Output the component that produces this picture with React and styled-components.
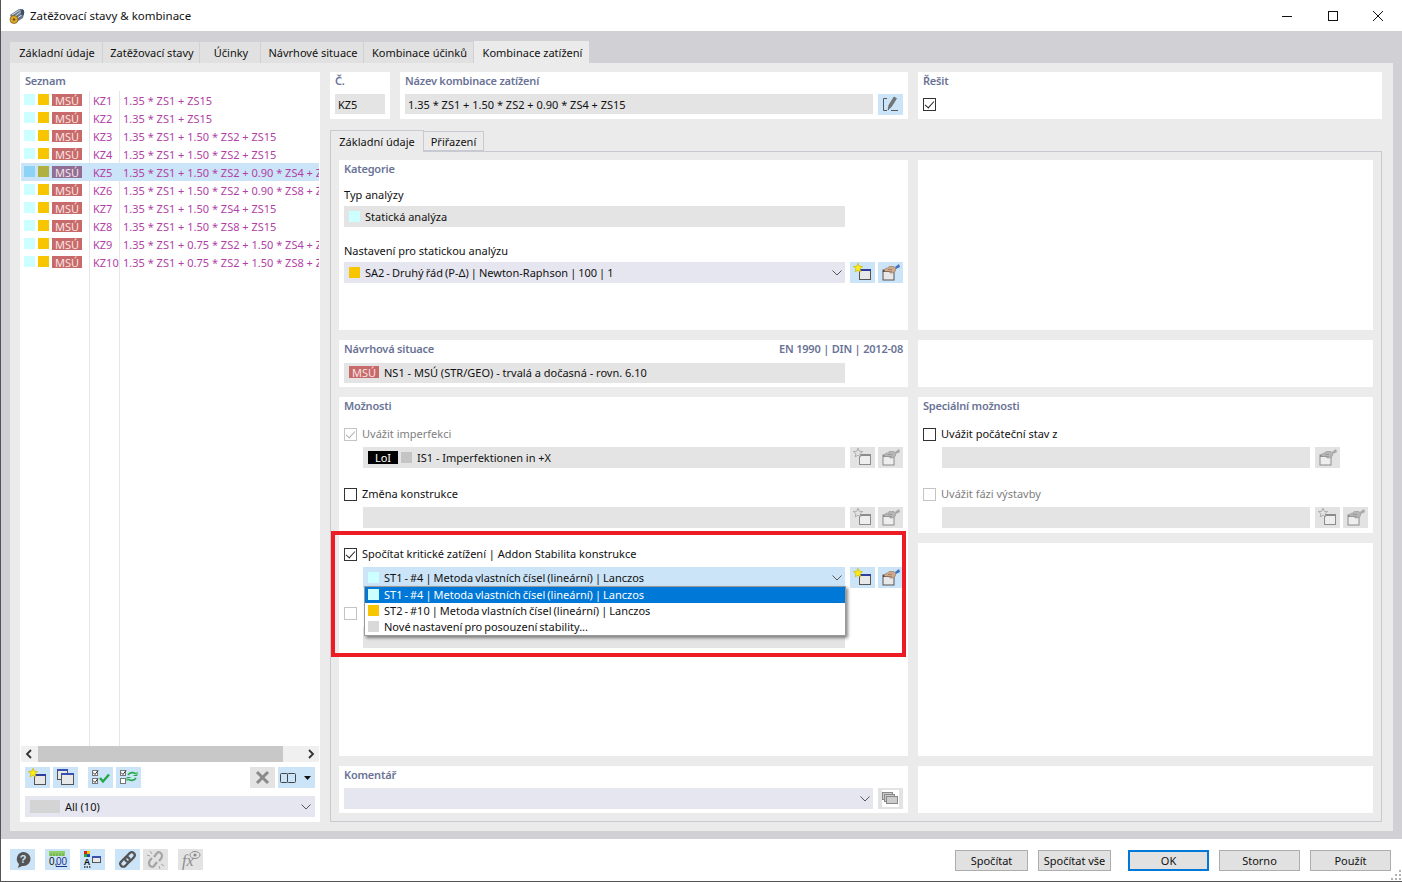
import React from 'react';
import styled, { createGlobalStyle } from 'styled-components';

const rows = [
    { id: 'KZ1', text: '1.35 * ZS1 + ZS15' },
    { id: 'KZ2', text: '1.35 * ZS1 + ZS15' },
    { id: 'KZ3', text: '1.35 * ZS1 + 1.50 * ZS2 + ZS15' },
    { id: 'KZ4', text: '1.35 * ZS1 + 1.50 * ZS2 + ZS15' },
    { id: 'KZ5', text: '1.35 * ZS1 + 1.50 * ZS2 + 0.90 * ZS4 + ZS15', selected: true },
    { id: 'KZ6', text: '1.35 * ZS1 + 1.50 * ZS2 + 0.90 * ZS8 + ZS15' },
    { id: 'KZ7', text: '1.35 * ZS1 + 1.50 * ZS4 + ZS15' },
    { id: 'KZ8', text: '1.35 * ZS1 + 1.50 * ZS8 + ZS15' },
    { id: 'KZ9', text: '1.35 * ZS1 + 0.75 * ZS2 + 1.50 * ZS4 + ZS15' },
    { id: 'KZ10', text: '1.35 * ZS1 + 0.75 * ZS2 + 1.50 * ZS8 + ZS15' },
];

const topTabs = [
    ['Základní údaje', 92],
    ['Zatěžovací stavy', 96],
    ['Účinky', 60],
    ['Návrhové situace', 102],
    ['Kombinace účinků', 109],
    ['Kombinace zatížení', 115],
];

const Star = ({ x, y, r, fill, stroke }) => {
    const pts = [];
    for (let i = 0; i < 10; i++) {
        const rad = i % 2 === 0 ? r : r * 0.45;
        const a = -Math.PI / 2 + (i * Math.PI) / 5;
        pts.push(`${(x + rad * Math.cos(a)).toFixed(1)},${(y + rad * Math.sin(a)).toFixed(1)}`);
    }
    return <polygon points={pts.join(' ')} fill={fill} stroke={stroke} strokeWidth="0.7" />;
};

const NewIcon = ({ off }) => (
    <svg width="25" height="21" viewBox="0 0 25 21">
        <rect x="9.500" y="7.500" width="11" height="10" fill={off ? '#eee' : '#e8e8e8'} stroke={off ? '#8c8c8c' : '#555'} />
        <rect x="9" y="7" width="12" height="2" fill={off ? '#8c8c8c' : '#2f3f9c'} />
        <Star x={8} y={6} r={4.800} fill={off ? '#e3e3e3' : '#f7ee1e'} stroke={off ? '#9a9a9a' : '#d8b400'} />
    </svg>
);

const HandIcon = ({ off }) => (
    <svg width="25" height="21" viewBox="0 0 25 21">
        <rect x="5" y="8" width="11" height="10" fill={off ? '#eee' : '#e8e8e8'} stroke={off ? '#8c8c8c' : '#555'} />
        <rect x="5" y="8" width="11" height="2" fill={off ? '#8c8c8c' : '#444'} />
        <path d="M6 9c0-2 2-3 4-3l1-1.500h5l1.500 1.500v3l-2.500 2h-3l-1-1.500H7.500z" fill={off ? '#b5b5b5' : '#cfa88c'} stroke={off ? '#8c8c8c' : '#8a6a55'} strokeWidth="0.5" />
        <path d="M10 7.500h4M11 9.500h3" stroke={off ? '#8c8c8c' : '#8a6a55'} strokeWidth="0.6" />
        <path d="M17 5l4-3 1 3-4 2z" fill={off ? '#a8a8a8' : '#3f74c4'} />
    </svg>
);

const EditIcon = () => (
    <svg width="25" height="21" viewBox="0 0 25 21">
        <path d="M9 4.500H5.500v12H9M13 16.500h7" fill="none" stroke="#555" />
        <path d="M10 16l1-5 5-8 2.500 1.500-5 8z" fill="#777" stroke="#444" strokeWidth="0.5" />
    </svg>
);

const CopyIcon = () => (
    <svg width="25" height="21" viewBox="0 0 25 21">
        <rect x="4.500" y="2.500" width="10" height="10" fill="#e8e8e8" stroke="#555" />
        <rect x="4" y="2" width="11" height="2" fill="#3b4fb0" />
        <rect x="8.500" y="6.500" width="12" height="11" fill="#e8e8e8" stroke="#555" />
        <rect x="8" y="6" width="13" height="2" fill="#3b4fb0" />
    </svg>
);

const CheckAllIcon = () => (
    <svg width="25" height="21" viewBox="0 0 25 21">
        <rect x="4.500" y="3.500" width="5" height="5" fill="#fff" stroke="#777" />
        <rect x="4.500" y="11.500" width="5" height="5" fill="#fff" stroke="#777" />
        <path d="M5 5.500l2 2 3-4M5 13.500l2 2 3-4" fill="none" stroke="#333" />
        <path d="M12 11l3 3.500 6-7" fill="none" stroke="#25a84a" strokeWidth="2.400" />
    </svg>
);

const SwapIcon = () => (
    <svg width="25" height="21" viewBox="0 0 25 21">
        <rect x="4.500" y="3.500" width="5" height="5" fill="#fff" stroke="#777" />
        <rect x="4.500" y="11.500" width="5" height="5" fill="#fff" stroke="#777" />
        <path d="M5 5.500l2 2 3-4" fill="none" stroke="#333" />
        <path d="M12 8c2-3 6-3 8-1M20 11c-2 3-6 3-8 1" fill="none" stroke="#25a84a" strokeWidth="1.600" />
        <path d="M21 5v3.500h-3.500M11 14v-3.500h3.500" fill="none" stroke="#25a84a" />
    </svg>
);

const CrossIcon = () => (
    <svg width="25" height="21" viewBox="0 0 25 21">
        <path d="M7 5l11 11M18 5L7 16" stroke="#8a8a8a" strokeWidth="3" />
    </svg>
);

const ColumnsIcon = () => (
    <svg width="37" height="21" viewBox="0 0 37 21">
        <rect x="2.500" y="6.500" width="7" height="9" rx="1" fill="none" stroke="#444" />
        <rect x="9.500" y="6.500" width="8" height="9" rx="1" fill="none" stroke="#444" />
        <path d="M26 9h7l-3.500 4z" fill="#111" />
    </svg>
);

const CommentIcon = () => (
    <svg width="25" height="21" viewBox="0 0 25 21">
        <rect x="4" y="2" width="17" height="17" fill="#fff" />
        <rect x="4.500" y="4.500" width="10" height="7" fill="#ccc" stroke="#888" />
        <rect x="6.500" y="6.500" width="10" height="7" fill="#ccc" stroke="#888" />
        <rect x="8.500" y="8.500" width="11" height="7" fill="#ccc" stroke="#888" />
    </svg>
);

const HelpIcon = () => (
    <svg width="25" height="21" viewBox="0 0 25 21">
        <path d="M13 3a7 7 0 0 1 1 14l-2 0-4 2 1-4a7 7 0 0 1 4-12z" fill="#555" />
        <text x="13" y="14" textAnchor="middle" fontSize="11" fontWeight="700" fontFamily="'Liberation Sans', sans-serif" fill="#cce4f7">?</text>
    </svg>
);

const NumberIcon = () => (
    <svg width="25" height="21" viewBox="0 0 25 21">
        <rect x="4" y="2" width="16" height="5" fill="#8fcf6a" />
        <path d="M6 4.500v2.500M9 4.500v2.500M12 4.500v2.500M15 4.500v2.500M18 4.500v2.500" stroke="#5f9f45" />
        <text x="4" y="16" fontSize="10" fontFamily="'Liberation Sans', sans-serif" fill="#111">0,</text>
        <text x="11" y="16" fontSize="10" fontFamily="'Liberation Sans', sans-serif" fill="#24308f" textDecoration="underline">00</text>
    </svg>
);

const ColorIcon = () => (
    <svg width="25" height="21" viewBox="0 0 25 21">
        <rect x="4" y="2" width="3" height="3" fill="#d62020" />
        <rect x="7" y="2" width="3" height="3" fill="#e8c800" />
        <rect x="4" y="5" width="3" height="3" fill="#2aa52a" />
        <rect x="7" y="5" width="3" height="3" fill="#2040c8" />
        <text x="7" y="16" textAnchor="middle" fontSize="9" fontWeight="700" fontFamily="'Liberation Sans', sans-serif" fill="#111">A</text>
        <path d="M4 18h1.500M6.500 18H8M9 18h1.500" stroke="#333" strokeWidth="1.500" />
        <rect x="12.500" y="7.500" width="8" height="6" fill="#e8e8e8" stroke="#555" />
        <rect x="12" y="7" width="9" height="2" fill="#3b4fb0" />
    </svg>
);

const LinkIcon = () => (
    <svg width="25" height="21" viewBox="0 0 25 21">
        <g transform="rotate(-45 12.500 10.500)" fill="none" stroke="#555" strokeWidth="2.200">
            <rect x="3.500" y="7.500" width="11" height="6" rx="3" />
            <rect x="10.500" y="7.500" width="11" height="6" rx="3" />
        </g>
    </svg>
);

const UnlinkIcon = () => (
    <svg width="25" height="21" viewBox="0 0 25 21">
        <path d="M11 8l3-4c2-2 5 0 5 3 0 2-1 3-3 5M14 13l-3 4c-2 2-5 0-5-3 0-2 1-3 3-5" fill="none" stroke="#a5a5a5" strokeWidth="2.200" />
        <path d="M7 2l2 3M4 6l3 1M18 15l3 2M16 17l1 3" stroke="#a5a5a5" />
    </svg>
);

const FxIcon = () => (
    <svg width="25" height="21" viewBox="0 0 25 21">
        <text x="4" y="17" fontSize="16" fontStyle="italic" fontFamily="'Liberation Serif', serif" fill="#8c8c8c">fx</text>
        <ellipse cx="17" cy="6" rx="5" ry="3.500" fill="none" stroke="#8c8c8c" />
        <circle cx="17" cy="6" r="1.600" fill="#8c8c8c" />
    </svg>
);

const AppIcon = () => (
    <svg width="18" height="18" viewBox="0 0 18 18">
        <path d="M2 8L11 2h3q3 1 2 5l-1 4-8 5z" fill="#66788c" />
        <path d="M4 8l8-5M6 10l8-6M8 12l7-5" stroke="#cfd9e2" />
        <ellipse cx="14.500" cy="5.500" rx="1.600" ry="3" fill="#3f4f60" />
        <circle cx="6" cy="12.500" r="4" fill="#e0a92b" stroke="#6b5316" strokeWidth="0.700" />
        <circle cx="6" cy="12.500" r="1.300" fill="#6b5316" />
    </svg>
);

const App = () => (
    <Window>
        <GlobalStyle />
        <TitleBar>
            <AppIcon />
            <TitleText>Zatěžovací stavy &amp; kombinace</TitleText>
            <WindowControls>
                <svg width="10" height="10" viewBox="0 0 10 10"><path d="M0 5.500h10" stroke="#111" /></svg>
                <svg width="10" height="10" viewBox="0 0 10 10"><rect x="0.500" y="0.500" width="9" height="9" fill="none" stroke="#111" /></svg>
                <svg width="10" height="10" viewBox="0 0 10 10"><path d="M0 0l10 10M10 0L0 10" stroke="#111" /></svg>
            </WindowControls>
        </TitleBar>

        <Workspace>
            <TabStrip>
                {topTabs.map(([label, width], i) => (
                    <TopTab key={label} $width={width} $active={i === topTabs.length - 1}>{label}</TopTab>
                ))}
            </TabStrip>
            <MainPanel>
                <ListPanel>
                    <ListTitle>Seznam</ListTitle>
                    <ListArea>
                        {rows.map((row) => (
                            <ListRow key={row.id} $selected={row.selected}>
                                <Swatch $color={row.selected ? '#8dd3f5' : '#ccffff'} />
                                <Swatch $color={row.selected ? '#b0b040' : '#f7c600'} />
                                <Badge $color={row.selected ? '#916e96' : '#c96a6a'}>MSÚ</Badge>
                                <RowCode>{row.id}</RowCode>
                                <RowFormula>{row.text}</RowFormula>
                            </ListRow>
                        ))}
                    </ListArea>
                    <ScrollBar>
                        <ScrollArrow viewBox="0 0 8 10"><path d="M6 1L2 5l4 4" /></ScrollArrow>
                        <ScrollThumb />
                        <ScrollArrow viewBox="0 0 8 10"><path d="M2 1l4 4-4 4" /></ScrollArrow>
                    </ScrollBar>
                    <ListToolbar>
                        <IconButton><NewIcon /></IconButton>
                        <IconButton><CopyIcon /></IconButton>
                        <IconButton $left={10}><CheckAllIcon /></IconButton>
                        <IconButton><SwapIcon /></IconButton>
                        <ToolbarGap />
                        <IconButton $off><CrossIcon /></IconButton>
                        <IconButton $wide><ColumnsIcon /></IconButton>
                    </ListToolbar>
                    <FilterSelect>
                        <FilterSwatch />
                        All (10)
                        <Chevron />
                    </FilterSelect>
                </ListPanel>

                <RightColumn>
                    <HeaderRow>
                        <HeaderCard $width={60}>
                            <CardTitle>Č.</CardTitle>
                            <Field $inset>KZ5</Field>
                        </HeaderCard>
                        <HeaderCard $width={508}>
                            <CardTitle>Název kombinace zatížení</CardTitle>
                            <FieldRow $top={0}>
                                <Field $grow $inset>1.35 * ZS1 + 1.50 * ZS2 + 0.90 * ZS4 + ZS15</Field>
                                <IconButton><EditIcon /></IconButton>
                            </FieldRow>
                        </HeaderCard>
                        <HeaderCard $width={464}>
                            <CardTitle>Řešit</CardTitle>
                            <HeaderCheck $checked />
                        </HeaderCard>
                    </HeaderRow>

                    <SubTabs>
                        <SubTab $active $width={94}>Základní údaje</SubTab>
                        <SubTab $width={60}>Přiřazení</SubTab>
                    </SubTabs>

                    <Frame>
                        <Card>
                            <SectionTitle>Kategorie</SectionTitle>
                            <FieldLabel>Typ analýzy</FieldLabel>
                            <Field $width={501} $tall>
                                <Swatch $color="#ccffff" />
                                Statická analýza
                            </Field>
                            <FieldLabel $top={15}>Nastavení pro statickou analýzu</FieldLabel>
                            <FieldRow $top={0}>
                                <Select $width={501}>
                                    <Swatch $color="#f7c600" />
                                    SA2 - Druhý řád (P-Δ) | Newton-Raphson | 100 | 1
                                    <Chevron />
                                </Select>
                                <IconButton><NewIcon /></IconButton>
                                <IconButton $tight><HandIcon /></IconButton>
                            </FieldRow>
                        </Card>
                        <Card />

                        <Card>
                            <SectionHead>
                                <SectionTitle>Návrhová situace</SectionTitle>
                                <NormText>EN 1990 | DIN | 2012-08</NormText>
                            </SectionHead>
                            <Field $width={501} $raised>
                                <Badge $color="#c96a6a">MSÚ</Badge>
                                NS1 - MSÚ (STR/GEO) - trvalá a dočasná - rovn. 6.10
                            </Field>
                        </Card>
                        <Card />

                        <TallCard>
                            <SectionTitle>Možnosti</SectionTitle>
                            <CheckRow $top={12} $off>
                                <CheckBox $checked $off />
                                Uvážit imperfekci
                            </CheckRow>
                            <IndentRow $top={6}>
                                <Field $width={482} $tall>
                                    <DarkBadge>LoI</DarkBadge>
                                    <Swatch $color="#c4c4c4" />
                                    IS1 - Imperfektionen in +X
                                </Field>
                                <IconButton $off><NewIcon off /></IconButton>
                                <IconButton $off $tight><HandIcon off /></IconButton>
                            </IndentRow>
                            <CheckRow $top={19}>
                                <CheckBox />
                                Změna konstrukce
                            </CheckRow>
                            <IndentRow $top={6}>
                                <Field $width={482} $tall />
                                <IconButton $off><NewIcon off /></IconButton>
                                <IconButton $off $tight><HandIcon off /></IconButton>
                            </IndentRow>
                            <CheckRow $top={19}>
                                <CheckBox $checked />
                                Spočítat kritické zatížení | Addon Stabilita konstrukce
                            </CheckRow>
                            <IndentRow $top={6}>
                                <Select $width={482} $open>
                                    <Swatch $color="#ccffff" />
                                    ST1 - #4 | Metoda vlastních čísel (lineární) | Lanczos
                                    <Chevron />
                                </Select>
                                <IconButton><NewIcon /></IconButton>
                                <IconButton $tight><HandIcon /></IconButton>
                                <DropList>
                                    <DropItem $active>
                                        <Swatch $color="#ccffff" />
                                        ST1 - #4 | Metoda vlastních čísel (lineární) | Lanczos
                                    </DropItem>
                                    <DropItem>
                                        <Swatch $color="#f7c600" />
                                        ST2 - #10 | Metoda vlastních čísel (lineární) | Lanczos
                                    </DropItem>
                                    <DropItem>
                                        <Swatch $color="#d9d9d9" />
                                        Nové nastavení pro posouzení stability...
                                    </DropItem>
                                </DropList>
                            </IndentRow>
                            <CheckRow $top={18}>
                                <CheckBox $off />
                            </CheckRow>
                            <IndentRow $top={7}>
                                <Field $width={482} $tall />
                            </IndentRow>
                            <RedFrame />
                        </TallCard>

                        <Card>
                            <SectionTitle>Speciální možnosti</SectionTitle>
                            <CheckRow $top={12}>
                                <CheckBox />
                                Uvážit počáteční stav z
                            </CheckRow>
                            <IndentRow $top={6}>
                                <Field $width={368} $tall />
                                <IconButton $off><HandIcon off /></IconButton>
                            </IndentRow>
                            <CheckRow $top={19} $off>
                                <CheckBox $off />
                                Uvážit fázi výstavby
                            </CheckRow>
                            <IndentRow $top={6}>
                                <Field $width={368} $tall />
                                <IconButton $off><NewIcon off /></IconButton>
                                <IconButton $off $tight><HandIcon off /></IconButton>
                            </IndentRow>
                        </Card>
                        <Card />

                        <Card>
                            <SectionTitle>Komentář</SectionTitle>
                            <FieldRow $top={4}>
                                <Select $width={529}>
                                    <Chevron />
                                </Select>
                                <IconButton $off><CommentIcon /></IconButton>
                            </FieldRow>
                        </Card>
                        <Card />
                    </Frame>
                </RightColumn>
            </MainPanel>
        </Workspace>

        <Footer>
            <IconButton><HelpIcon /></IconButton>
            <IconButton $left={10}><NumberIcon /></IconButton>
            <IconButton $left={10}><ColorIcon /></IconButton>
            <IconButton $left={10}><LinkIcon /></IconButton>
            <IconButton $off><UnlinkIcon /></IconButton>
            <IconButton $off $left={10}><FxIcon /></IconButton>
            <ToolbarGap />
            <DialogButton $width={73}>Spočítat</DialogButton>
            <DialogButton $width={73} $left={10}>Spočítat vše</DialogButton>
            <DialogButton $width={81} $left={17} $primary>OK</DialogButton>
            <DialogButton $width={81} $left={10}>Storno</DialogButton>
            <DialogButton $width={81} $left={10}>Použít</DialogButton>
            <Grip viewBox="0 0 11 11">
                <path d="M8 0h2v2H8zM4 4h2v2H4zM8 4h2v2H8zM0 8h2v2H0zM4 8h2v2H4zM8 8h2v2H8z" />
            </Grip>
        </Footer>
    </Window>
);

const Chevron = () => (
    <ChevronMark viewBox="0 0 10 6">
        <path d="M0.500 0.500L5 5l4.500-4.500" />
    </ChevronMark>
);

const GlobalStyle = createGlobalStyle`
    html, body {
        margin: 0;
        padding: 0;
        background: #fff;
    }
    body {
        font-family: "Noto Sans", "Open Sans", sans-serif;
        font-size: 11px;
        color: #111;
    }
`;

const Window = styled.div`
    width: 1402px;
    height: 882px;
    box-sizing: border-box;
    display: flex;
    flex-direction: column;
    border-left: 1px solid #555;
    border-bottom: 1px solid #555;
    overflow: hidden;
    background: #fff;
`;

const TitleBar = styled.div`
    height: 31px;
    flex: none;
    display: flex;
    align-items: center;
    padding-left: 7px;
`;

const TitleText = styled.span`
    margin-left: 4px;
    font-size: 11.500px;
`;

const WindowControls = styled.div`
    margin-left: auto;
    width: 101px;
    padding-right: 19px;
    display: flex;
    justify-content: space-between;
`;

const Workspace = styled.div`
    height: 808px;
    flex: none;
    box-sizing: border-box;
    background: #d0d0d5;
    padding: 10px 9px 8px;
    display: flex;
    flex-direction: column;
`;

const TabStrip = styled.div`
    display: flex;
    gap: 1px;
    height: 22px;
    flex: none;
    align-items: flex-end;
`;

const TopTab = styled.div`
    width: ${(p) => p.$width}px;
    height: ${(p) => (p.$active ? 22 : 21)}px;
    box-sizing: border-box;
    padding-left: 2px;
    display: flex;
    align-items: center;
    justify-content: center;
    background: ${(p) => (p.$active ? '#ebebeb' : '#e1e1e1')};
    white-space: nowrap;
`;

const MainPanel = styled.div`
    flex: 1;
    background: #ebebeb;
    padding: 9px 10px;
    display: flex;
    gap: 10px;
    min-height: 0;
`;

const ListPanel = styled.div`
    width: 300px;
    flex: none;
    background: #fff;
    display: flex;
    flex-direction: column;
    padding: 0 1px;
    box-sizing: border-box;
`;

const SectionTitle = styled.div`
    color: #6a7396;
    font-weight: 600;
    letter-spacing: -0.2px;
    height: 18px;
    line-height: 18px;
`;

const ListTitle = styled(SectionTitle)`
    padding-left: 4px;
    height: 19px;
`;

const ListArea = styled.div`
    height: 655px;
    flex: none;
    overflow: hidden;
    background:
        linear-gradient(#e6e6e6, #e6e6e6) 68px 0 / 1px 100% no-repeat,
        linear-gradient(#e6e6e6, #e6e6e6) 98px 0 / 1px 100% no-repeat;
`;

const Swatch = styled.span`
    width: 11px;
    height: 11px;
    flex: none;
    margin-right: 3px;
    background: ${(p) => p.$color};
`;

const Badge = styled.span`
    width: 30px;
    height: 12px;
    flex: none;
    display: inline-flex;
    align-items: center;
    justify-content: center;
    background: ${(p) => p.$color};
    color: #f7e4e4;
    font-size: 11px;
    margin-right: 5px;
`;

const ListRow = styled.div`
    height: 18px;
    display: flex;
    align-items: center;
    padding-left: 3px;
    white-space: nowrap;
    background: ${(p) => (p.$selected ? '#cce4f7' : 'transparent')};
    ${Swatch}, ${Badge} {
        align-self: flex-start;
        margin-top: 3px;
    }
`;

const RowCode = styled.span`
    width: 30px;
    margin-left: 6px;
    flex: none;
    color: #b23fa6;
`;

const RowFormula = styled.span`
    color: #b23fa6;
`;

const ScrollBar = styled.div`
    height: 16px;
    flex: none;
    background: #f0f0f0;
    display: flex;
    align-items: center;
`;

const ScrollThumb = styled.div`
    width: 245px;
    height: 100%;
    background: #c8c8c8;
    margin: 0 auto 0 5px;
`;

const ScrollArrow = styled.svg`
    width: 8px;
    height: 10px;
    margin: 0 0 0 4px;
    flex: none;
    path {
        fill: none;
        stroke: #333;
        stroke-width: 1.800;
    }
    &:last-child {
        margin: 0 4px 0 0;
    }
`;

const ListToolbar = styled.div`
    margin-top: 5px;
    padding: 0 4px;
    display: flex;
    gap: 3px;
`;

const ToolbarGap = styled.div`
    flex: 1;
`;

const IconButton = styled.div`
    width: ${(p) => (p.$wide ? 37 : 25)}px;
    height: 21px;
    flex: none;
    background: ${(p) => (p.$off ? '#e3e3e3' : '#cce4f7')};
    margin-left: ${(p) => (p.$tight ? -2 : p.$left ? p.$left - 3 : 0)}px;
    svg {
        display: block;
    }
`;

const FilterSelect = styled.div`
    margin: 8px 4px 0;
    height: 21px;
    background: #e6e6f0;
    display: flex;
    align-items: center;
    padding: 0 2px 0 5px;
`;

const FilterSwatch = styled.span`
    width: 30px;
    height: 13px;
    background: #d4d4d4;
    margin-right: 5px;
`;

const ChevronMark = styled.svg`
    width: 10px;
    height: 6px;
    margin-left: auto;
    margin-right: 2px;
    flex: none;
    path {
        fill: none;
        stroke: #555;
    }
`;

const RightColumn = styled.div`
    width: 1052px;
    flex: none;
    display: flex;
    flex-direction: column;
`;

const HeaderRow = styled.div`
    display: flex;
    gap: 10px;
    height: 47px;
    flex: none;
`;

const HeaderCard = styled.div`
    width: ${(p) => p.$width}px;
    box-sizing: border-box;
    background: #fff;
    padding: 0 5px;
`;

const CardTitle = styled(SectionTitle)`
    height: 22px;
    line-height: 18px;
`;

const Field = styled.div`
    height: ${(p) => (p.$tall ? 21 : 20)}px;
    width: ${(p) => (p.$width ? `${p.$width}px` : 'auto')};
    flex: ${(p) => (p.$grow ? 1 : 'none')};
    background: #e4e4e4;
    display: flex;
    align-items: center;
    padding: 0 ${(p) => (p.$inset ? 3 : 5)}px ${(p) => (p.$raised ? 2 : 0)}px;
    box-sizing: border-box;
    white-space: nowrap;
    ${Swatch} {
        margin-right: 5px;
    }
    ${Badge} {
        margin-right: 5px;
    }
`;

const FieldRow = styled.div`
    display: flex;
    gap: 5px;
    margin-top: ${(p) => p.$top}px;
`;

const SubTabs = styled.div`
    margin-top: 10px;
    height: 22px;
    flex: none;
    display: flex;
    align-items: flex-end;
`;

const SubTab = styled.div`
    width: ${(p) => p.$width}px;
    height: ${(p) => (p.$active ? 22 : 20)}px;
    box-sizing: border-box;
    display: flex;
    align-items: center;
    justify-content: center;
    background: #ebebeb;
    border: 1px solid #c9c9d2;
    border-left-width: ${(p) => (p.$active ? 1 : 0)}px;
    border-bottom: ${(p) => (p.$active ? 'none' : '1px solid #c9c9d2')};
    margin-bottom: ${(p) => (p.$active ? -1 : 0)}px;
    position: relative;
`;

const Frame = styled.div`
    flex: 1;
    box-sizing: border-box;
    border: 1px solid #c9c9d2;
    padding: 8px 8px 7px;
    display: grid;
    grid-template-columns: 569px 455px;
    grid-template-rows: 170px 47px 136px 213px 47px;
    gap: 10px;
`;

const Card = styled.div`
    background: #fff;
    padding: 0 5px;
    position: relative;
`;

const TallCard = styled(Card)`
    grid-row: span 2;
`;

const SectionHead = styled.div`
    display: flex;
    justify-content: space-between;
    height: 23px;
`;

const NormText = styled.span`
    color: #6a7396;
    font-weight: 600;
    letter-spacing: -0.2px;
    line-height: 18px;
`;

const FieldLabel = styled.div`
    margin-top: ${(p) => p.$top ?? 8}px;
    height: 20px;
    line-height: 18px;
`;

const Select = styled(Field)`
    background: ${(p) => (p.$open ? '#cce4f7' : '#e6e6f0')};
    height: 21px;
    padding-right: 1px;
    word-spacing: -0.850px;
`;

const CheckBox = styled.span`
    display: inline-block;
    width: 13px;
    height: 13px;
    box-sizing: border-box;
    flex: none;
    margin-right: 5px;
    background: #fff;
    border: 1px solid ${(p) => (p.$off ? '#c4c4c4' : '#333')};
    position: relative;
    &::after {
        content: '';
        display: ${(p) => (p.$checked ? 'block' : 'none')};
        position: absolute;
        left: 3px;
        top: 0;
        width: 4px;
        height: 8px;
        border: solid ${(p) => (p.$off ? '#b0b0b0' : '#222')};
        border-width: 0 1px 1px 0;
        transform: rotate(42deg);
    }
`;

const CheckRow = styled.div`
    margin-top: ${(p) => p.$top}px;
    height: 14px;
    line-height: 14px;
    display: flex;
    align-items: flex-start;
    color: ${(p) => (p.$off ? '#808080' : '#111')};
    ${CheckBox} {
        margin-top: 1px;
    }
`;

const HeaderCheck = styled(CheckBox)`
    margin-top: 4px;
`;

const IndentRow = styled(FieldRow)`
    margin-left: 19px;
    position: relative;
`;

const DarkBadge = styled.span`
    width: 30px;
    height: 13px;
    flex: none;
    margin-right: 3px;
    background: #000;
    color: #fff;
    display: inline-flex;
    align-items: center;
    justify-content: center;
`;

const DropList = styled.div`
    position: absolute;
    left: 1px;
    top: 19px;
    width: 482px;
    box-sizing: border-box;
    background: #fff;
    border: 1px solid #9a9a9a;
    box-shadow: 2px 2px 3px rgba(0, 0, 0, 0.45);
    z-index: 2;
`;

const DropItem = styled.div`
    height: 16px;
    box-sizing: border-box;
    display: flex;
    align-items: center;
    padding: 0 0 2px 3px;
    white-space: nowrap;
    word-spacing: -0.850px;
    background: ${(p) => (p.$active ? '#0078d7' : 'transparent')};
    color: ${(p) => (p.$active ? '#fff' : '#111')};
    ${Swatch} {
        margin-right: 5px;
    }
`;

const RedFrame = styled.div`
    position: absolute;
    left: -8px;
    top: 134px;
    width: 575px;
    height: 126px;
    box-sizing: border-box;
    border: 4px solid #ed1c24;
    z-index: 3;
    pointer-events: none;
`;

const Footer = styled.div`
    flex: 1;
    display: flex;
    align-items: center;
    padding: 0 11px 1px 9px;
    gap: 3px;
    position: relative;
`;

const DialogButton = styled.div`
    width: ${(p) => p.$width}px;
    height: 21px;
    box-sizing: border-box;
    flex: none;
    margin-left: ${(p) => (p.$left ? p.$left - 3 : 0)}px;
    margin-top: 2px;
    display: flex;
    align-items: center;
    justify-content: center;
    background: #e1e1e1;
    border: ${(p) => (p.$primary ? '2px solid #0078d7' : '1px solid #adadad')};
`;

const Grip = styled.svg`
    position: absolute;
    right: 0;
    bottom: 0;
    width: 11px;
    height: 11px;
    path {
        fill: #b0b0b0;
    }
`;

export default App;
